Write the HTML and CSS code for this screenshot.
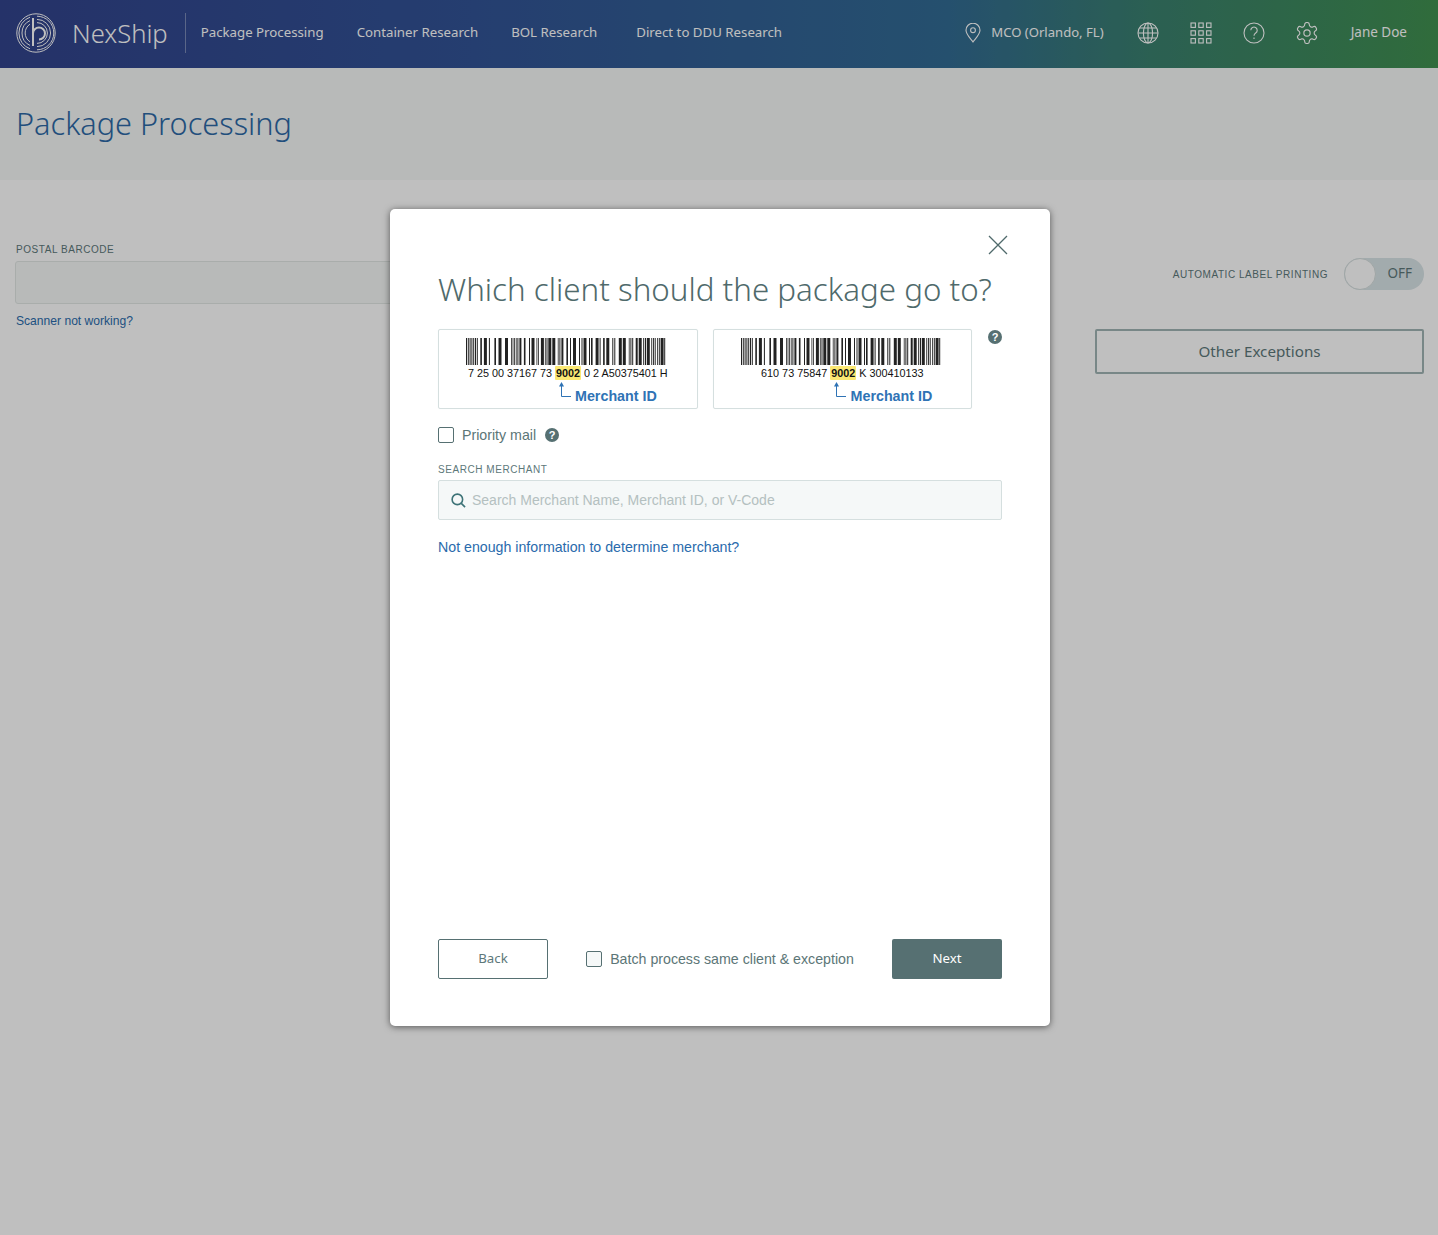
FILE: index.html
```html
<!DOCTYPE html>
<html lang="en">
<head>
    <meta charset="UTF-8">
    <meta name="viewport" content="width=device-width, initial-scale=1.0">
    <title>Package Processing</title>
    <link rel="stylesheet" href="styles.css">
</head>
<body>
    <header class="topbar">
        <a class="brand" href="#">
            <svg class="brand-logo" viewBox="0 0 40 40" fill="none" stroke="#fff">
                <circle cx="20" cy="20" r="19.2" stroke-width="1"/>
                <path d="M14 4.2A16.8 16.8 0 0 0 14 35.8M21 3.2A16.8 16.8 0 0 1 21 36.8" stroke-width="1"/>
                <path d="M14 7.6A13.6 13.6 0 0 0 14 32.4M21 6.4A13.6 13.6 0 0 1 21 33.6" stroke-width="1"/>
                <path d="M14 11.2A10.4 10.4 0 0 0 14 28.8M21 9.6A10.4 10.4 0 0 1 21 30.4" stroke-width="1"/>
                <path d="M17 5V33M17 20.5a6 6 0 1 1 6 6" stroke-width="2"/>
            </svg>
            <span class="brand-name">NexShip</span>
        </a>
        <nav class="nav">
            <a href="#">Package Processing</a>
            <a href="#">Container Research</a>
            <a href="#">BOL Research</a>
            <a class="nav-wide" href="#">Direct to DDU Research</a>
        </nav>
        <div class="tools">
            <a class="location" href="#">
                <svg class="icon-pin" viewBox="0 0 16 20" fill="none" stroke="#fff" stroke-width="1.1">
                    <path d="M8 19C4.5 14.5 1 11 1 7.2a7 7 0 0 1 14 0C15 11 11.5 14.5 8 19z"/>
                    <circle cx="8" cy="7.2" r="2.4"/>
                </svg>
                <span class="tool-text">MCO (Orlando, FL)</span>
            </a>
            <svg class="icon" viewBox="0 0 22 22" fill="none" stroke="#fff" stroke-width="1.1">
                <circle cx="11" cy="11" r="10"/>
                <ellipse cx="11" cy="11" rx="4.6" ry="10"/>
                <path d="M11 1v20M1.2 11h19.6M2.6 6h16.8M2.6 16h16.8"/>
            </svg>
            <svg class="icon" viewBox="0 0 22 22" fill="none" stroke="#fff" stroke-width="1.1">
                <rect x="1" y="1" width="4.4" height="4.4"/>
                <rect x="8.8" y="1" width="4.4" height="4.4"/>
                <rect x="16.6" y="1" width="4.4" height="4.4"/>
                <rect x="1" y="8.8" width="4.4" height="4.4"/>
                <rect x="8.8" y="8.8" width="4.4" height="4.4"/>
                <rect x="16.6" y="8.8" width="4.4" height="4.4"/>
                <rect x="1" y="16.6" width="4.4" height="4.4"/>
                <rect x="8.8" y="16.6" width="4.4" height="4.4"/>
                <rect x="16.6" y="16.6" width="4.4" height="4.4"/>
            </svg>
            <svg class="icon" viewBox="0 0 22 22" fill="none" stroke="#fff" stroke-width="1.1">
                <circle cx="11" cy="11" r="10"/>
                <path d="M7.8 8.2a3.2 3.2 0 1 1 4.9 2.8c-1.1.7-1.7 1.3-1.7 2.8"/>
                <path d="M11 15.6v1.5"/>
            </svg>
            <svg class="icon" viewBox="1.5 1.5 21 21" fill="none" stroke="#fff" stroke-width="1.1">
                <path d="M12.22 2h-.44a2 2 0 0 0-2 2v.18a2 2 0 0 1-1 1.73l-.43.25a2 2 0 0 1-2 0l-.15-.08a2 2 0 0 0-2.73.73l-.22.38a2 2 0 0 0 .73 2.73l.15.1a2 2 0 0 1 1 1.72v.51a2 2 0 0 1-1 1.74l-.15.09a2 2 0 0 0-.73 2.73l.22.38a2 2 0 0 0 2.73.73l.15-.08a2 2 0 0 1 2 0l.43.25a2 2 0 0 1 1 1.73V20a2 2 0 0 0 2 2h.44a2 2 0 0 0 2-2v-.18a2 2 0 0 1 1-1.73l.43-.25a2 2 0 0 1 2 0l.15.08a2 2 0 0 0 2.73-.73l.22-.39a2 2 0 0 0-.73-2.73l-.15-.08a2 2 0 0 1-1-1.74v-.5a2 2 0 0 1 1-1.74l.15-.09a2 2 0 0 0 .73-2.73l-.22-.38a2 2 0 0 0-2.73-.73l-.15.08a2 2 0 0 1-2 0l-.43-.25a2 2 0 0 1-1-1.73V4a2 2 0 0 0-2-2z"/>
                <circle cx="12" cy="12" r="3"/>
            </svg>
            <a class="user tool-text" href="#">Jane Doe</a>
        </div>
    </header>

    <section class="page-head">
        <h1>Package Processing</h1>
    </section>

    <main class="content">
        <div class="scan-col">
            <label class="field-label" for="postal">Postal barcode</label>
            <input class="scan-input" type="text" id="postal">
            <a class="small-link" href="#">Scanner not working?</a>
        </div>
        <div class="side-col">
            <div class="auto-print">
                <span class="field-label">Automatic label printing</span>
                <div class="toggle"><span class="knob"></span><span class="toggle-text">OFF</span></div>
            </div>
            <button class="exceptions">Other Exceptions</button>
        </div>
    </main>

    <div class="scrim">
        <div class="modal">
            <div class="modal-close">
                <svg viewBox="0 0 20 20" fill="none" stroke="#4f6a6b" stroke-width="1.3">
                    <path d="M1 1l18 18M19 1L1 19"/>
                </svg>
            </div>
            <h2>Which client should the package go to?</h2>

            <div class="samples">
                <div class="sample">
                    <svg class="barcode" viewBox="0 0 200 27">
                        <line id="bars" x1="0" y1="13.5" x2="200" y2="13.5" stroke="#222" stroke-width="27" stroke-dasharray="1 .8 1 .8 1 .8 1 .8 1 .8 1 .8 1 2.5 1.6 2 3 2 1 4.5 1.6 2.5 3 3.5 3 3 .8 .8 .8 .8 .8 .8 .8 .8 1 1 2 2.5 1.6 3.5 1 1.5 3 2 .8 .8 .8 2 3 1 .8 .8 1 .8 3 1 3 2.5 .8 .8 1 1 2 3 1.6 2 1 2 3 3 1 1.5 1 1 3 2.5 1 1 1.6 3 3 1 1 2.5 1.6 1.6 3 3 1 1 1 3.5 3 1 3 3 .8 .8 1 .8 1 2.5 2 1 3 1.5 1 .8 1 .8 3 1.5 .8 .8 1 .8 1 1.5 .8 .8 1 .8 3 .6 1 .8"/>
                    </svg>
                    <div class="digits">7 25 00 37167 73 <mark>9002</mark> 0 2 A50375401 H</div>
                    <div class="merchant">
                        <svg viewBox="0 0 14 16" fill="none" stroke="#2f73b5" stroke-width="1">
                            <path d="M3.5 4v10.5H13"/>
                            <path d="M3.5 0l2.5 4.5H1z" fill="#2f73b5" stroke="none"/>
                        </svg>
                        Merchant ID
                    </div>
                </div>
                <div class="sample">
                    <svg class="barcode" viewBox="0 0 200 27"><use href="#bars"/></svg>
                    <div class="digits">610 73 75847 <mark>9002</mark> K 300410133</div>
                    <div class="merchant merchant-alt">
                        <svg viewBox="0 0 14 16" fill="none" stroke="#2f73b5" stroke-width="1">
                            <path d="M3.5 4v10.5H13"/>
                            <path d="M3.5 0l2.5 4.5H1z" fill="#2f73b5" stroke="none"/>
                        </svg>
                        Merchant ID
                    </div>
                </div>
                <span class="help help-top">?</span>
            </div>

            <label class="check check-priority">
                <span class="box"></span>
                Priority mail
                <span class="help">?</span>
            </label>

            <label class="field-label search-label" for="merchant">Search merchant</label>
            <div class="search">
                <svg viewBox="0 0 16 16" fill="none" stroke="#3d7377" stroke-width="1.7">
                    <circle cx="6.8" cy="6.8" r="5.6"/>
                    <path d="M11 11l4 4"/>
                </svg>
                <input type="text" id="merchant" placeholder="Search Merchant Name, Merchant ID, or V-Code">
            </div>
            <a class="info-link" href="#">Not enough information to determine merchant?</a>

            <div class="modal-foot">
                <button class="btn btn-back">Back</button>
                <label class="check">
                    <span class="box box-tint"></span>
                    Batch process same client &amp; exception
                </label>
                <button class="btn btn-next">Next</button>
            </div>
        </div>
    </div>
</body>
</html>
```

FILE: styles.css
```css
* {
    margin: 0;
    padding: 0;
    box-sizing: border-box;
}

body {
    font-family: 'Liberation Sans', Arial, sans-serif;
    background: #fff;
    color: #5d787a;
    min-height: 1235px;
    position: relative;
}

a {
    text-decoration: none;
    color: inherit;
}

/* top bar */
.topbar {
    height: 68px;
    display: flex;
    align-items: center;
    padding: 0 31px 2px 16px;
    background: linear-gradient(90deg, #32438c 0%, #325396 33%, #326b93 66%, #3a806e 80%, #409050 100%);
    color: #fff;
    font-family: 'Noto Sans', sans-serif;
}

.brand {
    display: flex;
    align-items: center;
    height: 40px;
    padding-right: 17px;
    border-right: 1px solid rgba(255,255,255,0.35);
}

.brand-logo {
    width: 40px;
    height: 40px;
    margin-right: 16px;
}

.brand-name {
    font-size: 25.6px;
    font-weight: 300;
}

.nav {
    display: flex;
    gap: 33px;
    margin-left: 15px;
    padding-bottom: 2px;
    font-size: 13.25px;
}

.nav-wide {
    margin-left: 6px;
}

.tools {
    margin-left: auto;
    display: flex;
    align-items: center;
    gap: 31px;
    font-size: 13.1px;
}

.tool-text {
    padding-bottom: 2px;
}

.location {
    display: flex;
    align-items: center;
    gap: 10px;
    margin-right: 2px;
}

.user {
    margin-left: 2px;
    font-size: 13.5px;
}

.icon-pin {
    width: 16px;
    height: 20px;
}

.icon {
    width: 22px;
    height: 22px;
}

/* page head */
.page-head {
    height: 112px;
    background: #f6f8f7;
    padding: 34px 16px 0;
}

h1 {
    font-family: 'Noto Sans', sans-serif;
    font-size: 30.7px;
    font-weight: 300;
    color: #2c69a6;
}

/* page body */
.content {
    display: grid;
    grid-template-columns: 1fr 329px;
    gap: 15px;
    padding: 0 14px 0 15px;
}

.field-label {
    display: block;
    font-size: 10px;
    letter-spacing: 0.55px;
    text-transform: uppercase;
    color: #5d787a;
}

.scan-col {
    padding: 64px 60px 0 0;
}

.scan-col .field-label,
.small-link {
    margin-left: 1px;
}

.scan-input {
    display: block;
    width: 100%;
    height: 43px;
    margin: 6px 0 7px;
    background: #f6f8f7;
    border: 1px solid #e2e7e5;
    border-radius: 3px;
}

.small-link {
    font-size: 12.1px;
    color: #2a6bac;
}

.side-col {
    padding-top: 78px;
}

.auto-print {
    display: flex;
    align-items: center;
    justify-content: flex-end;
    gap: 16px;
}

.toggle {
    width: 80px;
    height: 32px;
    border-radius: 16px;
    background: #d9e4e7;
    display: flex;
    align-items: center;
    justify-content: space-between;
    padding: 0 12px 2px 0;
}

.knob {
    width: 32px;
    height: 32px;
    margin-bottom: -2px;
    border-radius: 50%;
    background: #fff;
    border: 1px solid #d5dede;
}

.toggle-text {
    font-family: 'Noto Sans', sans-serif;
    font-size: 13.5px;
}

.exceptions {
    display: block;
    width: 100%;
    height: 45px;
    margin-top: 39px;
    padding-bottom: 2px;
    background: transparent;
    border: 2px solid #a0b4b4;
    border-radius: 2px;
    font-family: 'Noto Sans', sans-serif;
    font-size: 15.2px;
    color: #5d787a;
}

/* modal */
.scrim {
    position: absolute;
    top: 0;
    left: 0;
    right: 0;
    bottom: 0;
    background: rgba(0,0,0,0.25);
    padding: 209px 0 0 2px;
    display: flex;
    justify-content: center;
    align-items: flex-start;
}

.modal {
    position: relative;
    width: 660px;
    height: 817px;
    background: #fff;
    border-radius: 5px;
    box-shadow: 0 1px 7px rgba(0,0,0,0.55);
    padding: 59px 48px 47px;
    display: flex;
    flex-direction: column;
}

.modal-close {
    position: absolute;
    top: 26px;
    right: 42px;
    width: 20px;
    height: 20px;
}

h2 {
    font-family: 'Noto Sans', sans-serif;
    font-size: 31.3px;
    font-weight: 300;
    line-height: 42px;
    white-space: nowrap;
    color: #4f6a6b;
}

.samples {
    display: flex;
    gap: 15px;
    margin-top: 19px;
}

.sample {
    width: 260px;
    height: 80px;
    border: 1px solid #d5dfdf;
    border-radius: 2px;
    padding-top: 8px;
    box-shadow: 0 0 1px #e8eded;
}

.barcode {
    display: block;
    width: 200px;
    height: 27px;
    margin-left: 27px;
}

.digits {
    margin-top: 1px;
    font-size: 10.8px;
    line-height: 14px;
    color: #111;
    text-align: center;
}

mark {
    background: #fbe873;
    color: #111;
    font-weight: bold;
    padding: 1px;
    border-radius: 1px;
}

.merchant {
    display: flex;
    align-items: flex-end;
    gap: 3px;
    margin-top: 2px;
    padding-left: 119px;
    font-size: 14.3px;
    font-weight: bold;
    line-height: 18px;
    color: #2f73b5;
}

.merchant-alt {
    gap: 4px;
}

.merchant svg {
    width: 14px;
    height: 16px;
    margin-bottom: 7px;
}

.help {
    display: inline-block;
    width: 14px;
    height: 14px;
    border-radius: 50%;
    background: #567072;
    color: #fff;
    font-size: 11px;
    font-weight: bold;
    line-height: 14px;
    text-align: center;
}

.help-top {
    margin: 1px 0 0 1px;
}

.check {
    display: flex;
    align-items: center;
    gap: 8px;
    font-size: 14.2px;
    color: #5c7677;
}

.check-priority {
    margin-top: 18px;
}

.check-priority .help {
    margin-left: 1px;
}

.box {
    width: 16px;
    height: 16px;
    border: 1px solid #567072;
    border-radius: 2px;
    background: #fff;
}

.box-tint {
    background: #f5f8f8;
}

.search-label {
    margin-top: 21px;
}

.search {
    display: flex;
    align-items: center;
    gap: 6px;
    height: 40px;
    margin-top: 5px;
    padding-left: 12px;
    background: #f5f8f8;
    border: 1px solid #d5dfdf;
    border-radius: 2px;
}

.search svg {
    width: 15px;
    height: 15px;
}

.search input {
    flex: 1;
    border: none;
    outline: none;
    background: transparent;
    font-family: inherit;
    font-size: 14px;
}

.search input::placeholder {
    color: #b4c0c0;
}

.info-link {
    margin-top: 19px;
    font-size: 14.2px;
    color: #2a6bac;
}

.modal-foot {
    margin-top: auto;
    display: flex;
    align-items: center;
    justify-content: space-between;
}

.btn {
    width: 110px;
    height: 40px;
    padding-bottom: 2px;
    border-radius: 2px;
    font-family: 'Noto Sans', sans-serif;
    font-size: 13.25px;
}

.btn-back {
    background: #fff;
    border: 1px solid #567072;
    color: #5d787a;
}

.btn-next {
    background: #567072;
    border: none;
    color: #fff;
}
```
